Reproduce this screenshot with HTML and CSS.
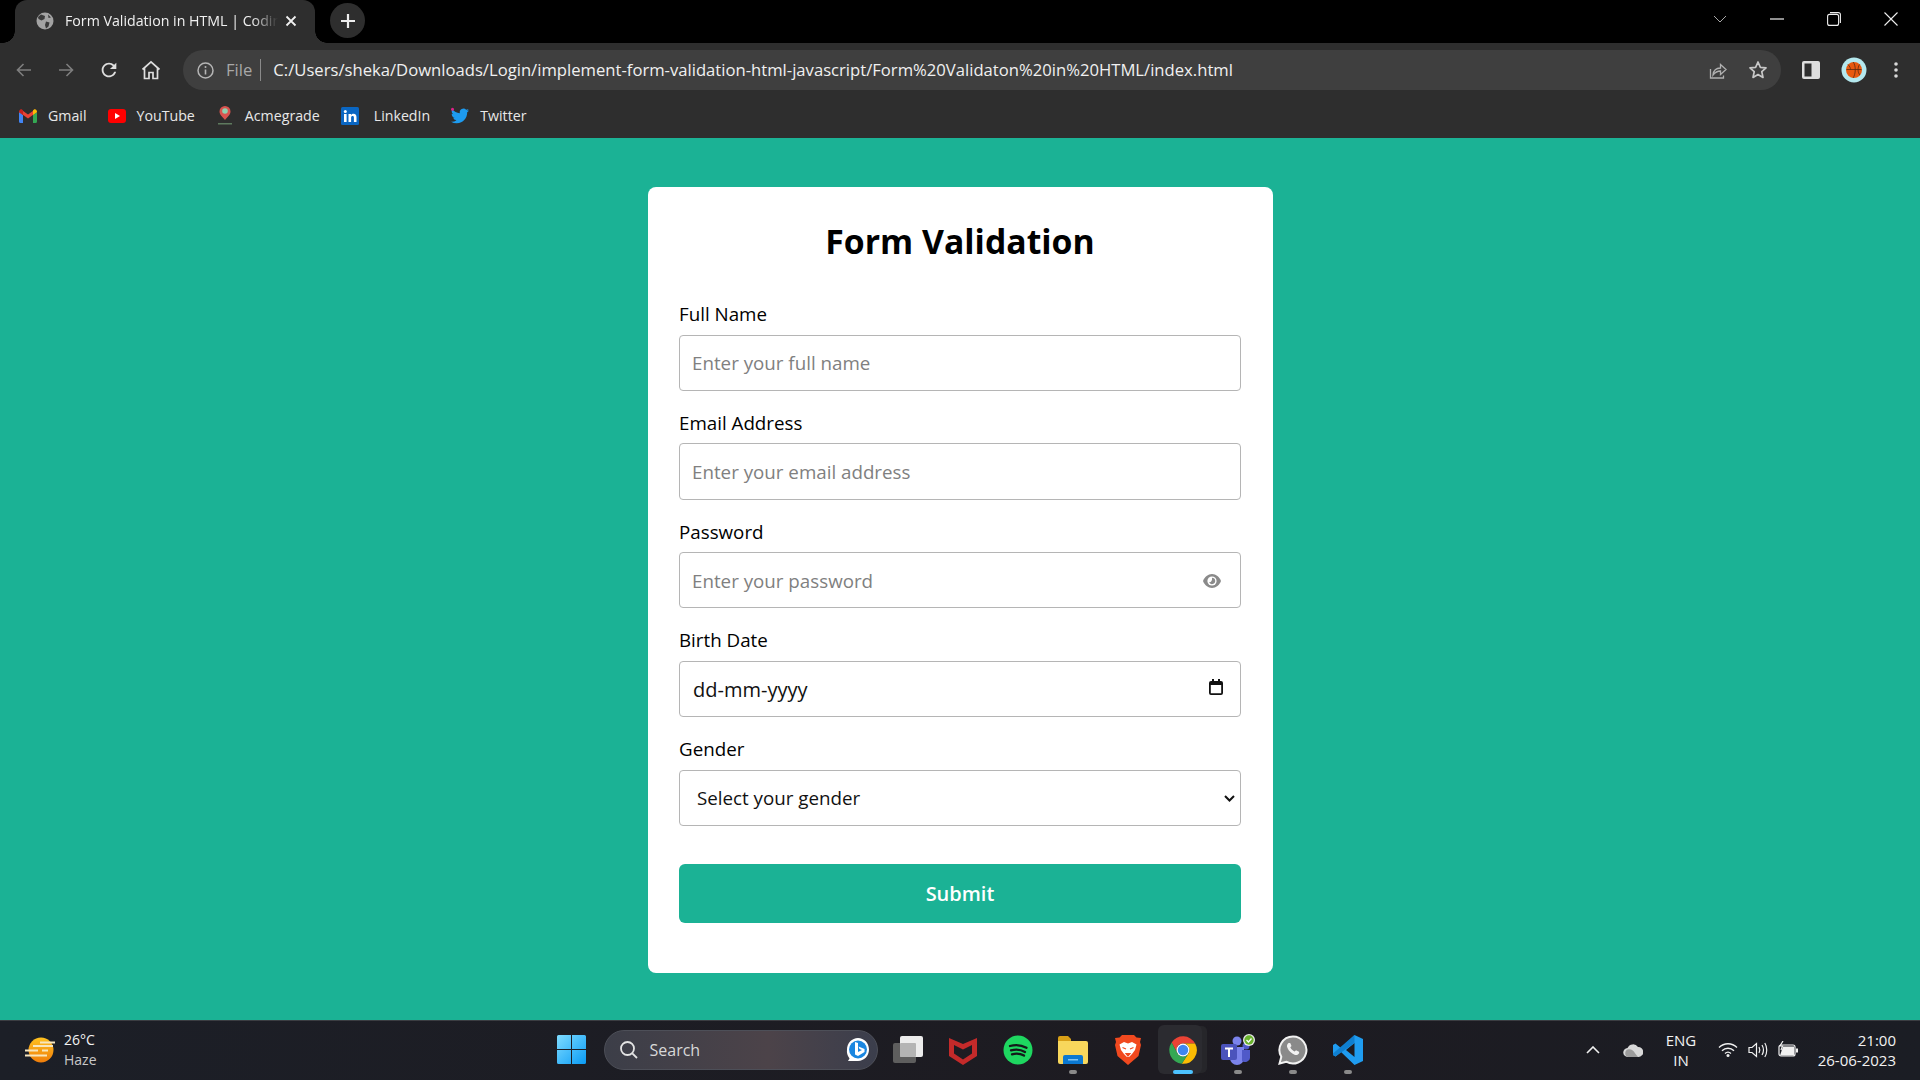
FILE: index.html
```html
<!DOCTYPE html>
<html lang="en">
<head>
    <meta charset="UTF-8">
    <meta name="viewport" content="width=device-width, initial-scale=1.0">
    <title>Form Validation in HTML</title>
    <link rel="stylesheet" href="styles.css">
</head>
<body>
    <!-- browser chrome -->
    <div class="tabstrip">
        <div class="tab">
            <svg class="tab-icon" width="18" height="18" viewBox="0 0 18 18"><circle cx="9" cy="9" r="8.5" fill="#a3a3a3"/><path d="M5 2.5l4 1.5-.5 3-3 1.5L2.5 7 2 5zM10 9.5l3.5 1-1 4-2.5 2-1-3.5zM12 2.5l3 3-2.5.5z" fill="#3a3a3a"/></svg>
            <span class="tab-title">Form Validation in HTML | Coding Nepal</span>
            <svg class="tab-close" width="12" height="12" viewBox="0 0 12 12"><path d="M1.5 1.5l9 9M10.5 1.5l-9 9" stroke="#f0f0f0" stroke-width="1.8"/></svg>
        </div>
        <div class="new-tab">
            <svg width="16" height="16" viewBox="0 0 16 16"><path d="M8 1v14M1 8h14" stroke="#eee" stroke-width="2.2"/></svg>
        </div>
        <div class="window-controls">
            <div class="win-btn win-chevron"><svg width="14" height="8" viewBox="0 0 14 8"><path d="M1 1l6 6 6-6" fill="none" stroke="#a8a8a8" stroke-width="1"/></svg></div>
            <div class="win-btn"><svg width="14" height="2" viewBox="0 0 14 2"><path d="M0 1h14" stroke="#eee" stroke-width="1.2"/></svg></div>
            <div class="win-btn"><svg width="14" height="14" viewBox="0 0 14 14"><rect x="0.6" y="2.4" width="11" height="11" rx="2" fill="none" stroke="#eee" stroke-width="1.1"/><path d="M3 0.6h8.4a2 2 0 0 1 2 2V11" fill="none" stroke="#eee" stroke-width="1.1"/></svg></div>
            <div class="win-btn"><svg width="14" height="14" viewBox="0 0 14 14"><path d="M.5.5l13 13M13.5.5l-13 13" stroke="#eee" stroke-width="1.1"/></svg></div>
        </div>
    </div>

    <div class="toolbar">
        <div class="tool-btn"><svg width="18" height="18" viewBox="0 0 18 18"><path d="M16 9H2.5M8.5 3L2.5 9l6 6" fill="none" stroke="#7e7e7e" stroke-width="1.6"/></svg></div>
        <div class="tool-btn"><svg width="18" height="18" viewBox="0 0 18 18"><path d="M2 9h13.5M9.5 3l6 6-6 6" fill="none" stroke="#7e7e7e" stroke-width="1.6"/></svg></div>
        <div class="tool-btn"><svg width="22" height="22" viewBox="0 0 24 24"><path fill="#dedede" d="M17.65 6.35A7.958 7.958 0 0 0 12 4c-4.42 0-7.99 3.58-7.99 8s3.57 8 7.99 8c3.73 0 6.84-2.55 7.73-6h-2.08A5.99 5.99 0 0 1 12 18c-3.31 0-6-2.69-6-6s2.69-6 6-6c1.66 0 3.14.69 4.22 1.78L13 11h7V4l-2.35 2.35z"/></svg></div>
        <div class="tool-btn"><svg width="20" height="20" viewBox="0 0 20 20"><path d="M1.5 9.5L10 1.8l8.5 7.7M3.5 8v10.500h4.500v-6h4v6h4.500V8" fill="none" stroke="#dedede" stroke-width="1.7"/></svg></div>
        <div class="omnibox">
            <svg class="omni-info" width="17" height="17" viewBox="0 0 17 17"><circle cx="8.500" cy="8.500" r="7.500" fill="none" stroke="#b5b5b5" stroke-width="1.500"/><path d="M8.500 7.500v5" stroke="#b5b5b5" stroke-width="1.600"/><circle cx="8.500" cy="5" r="1" fill="#b5b5b5"/></svg>
            <span class="omni-file">File</span>
            <span class="omni-sep"></span>
            <span class="omni-url">C:/Users/sheka/Downloads/Login/implement-form-validation-html-javascript/Form%20Validaton%20in%20HTML/index.html</span>
            <div class="omni-icon"><svg width="20" height="20" viewBox="0 0 20 20"><path d="M3.500 9v9h13v-2.500" fill="none" stroke="#b0b0b0" stroke-width="1.300"/><path d="M6 15c.5-4.500 3.500-7 7.500-7V4.500L19 9.500l-5.500 5V11C10.500 11 8 12.500 6 15z" fill="none" stroke="#b0b0b0" stroke-width="1.300"/></svg></div>
            <div class="omni-icon"><svg width="20" height="20" viewBox="0 0 20 20"><path d="M10 2l2.400 5.300 5.600.6-4.200 3.800 1.200 5.700-5-2.900-5 2.900 1.200-5.700L2 7.900l5.600-.6z" fill="none" stroke="#c8c8c8" stroke-width="1.700" stroke-linejoin="round"/></svg></div>
        </div>
        <div class="tool-btn"><svg width="18" height="18" viewBox="0 0 18 18"><rect width="18" height="18" rx="2" fill="#dedede"/><rect x="2.500" y="2.500" width="7" height="13" fill="#2e2e2e"/></svg></div>
        <div class="tool-btn"><svg width="26" height="26" viewBox="0 0 26 26"><circle cx="13" cy="13" r="12.500" fill="#b4e8ee"/><circle cx="13" cy="13" r="8" fill="#e8590f"/><path d="M5.500 12.500h15M12 5c3 3 3 12 0 16M7 7.500c2 2 2.500 4 2.500 5M18.500 7.500c-2 3-2 8 .5 10.500" fill="none" stroke="#5a2a10" stroke-width=".8"/></svg></div>
        <div class="tool-btn"><svg width="6" height="18" viewBox="0 0 6 18"><circle cx="3" cy="3" r="1.800" fill="#d8d8d8"/><circle cx="3" cy="9" r="1.800" fill="#d8d8d8"/><circle cx="3" cy="15" r="1.800" fill="#d8d8d8"/></svg></div>
    </div>

    <div class="bookmarks">
        <div class="bookmark">
            <svg width="18" height="14" viewBox="0 0 18 14"><path d="M0 3v9.500A1.500 1.500 0 0 0 1.500 14H4V6z" fill="#4285f4"/><path d="M14 14h2.500a1.500 1.500 0 0 0 1.500-1.500V3l-4 3z" fill="#34a853"/><path d="M0 3l9 6.500L18 3 16 .5 9 5.500 2 .5z" fill="#ea4335"/><path d="M0 3c0-2 1.500-3.300 3-2.500L4 1.500V6z" fill="#c5221f"/><path d="M14 1.500L15 .5c1.500-.8 3 .5 3 2.500l-4 3z" fill="#fbbc04"/></svg>
            <span>Gmail</span>
        </div>
        <div class="bookmark">
            <svg width="18" height="14" viewBox="0 0 18 14"><rect width="18" height="14" rx="3" fill="#f00"/><path d="M7 4l5 3-5 3z" fill="#fff"/></svg>
            <span>YouTube</span>
        </div>
        <div class="bookmark">
            <svg width="18" height="20" viewBox="0 0 18 20"><path d="M9 0a5.500 5.500 0 0 1 5.500 5.500C14.500 9 11 11 9 14 7 11 3.500 9 3.500 5.500A5.500 5.500 0 0 1 9 0z" fill="#d9534f"/><circle cx="9" cy="5" r="2.800" fill="#8fd1b0"/><path d="M2 17h14v1.500H2z" fill="#5e7a5e"/></svg>
            <span>Acmegrade</span>
        </div>
        <div class="bookmark wide-gap">
            <svg width="18" height="18" viewBox="0 0 18 18"><rect width="18" height="18" rx="1.500" fill="#0a66c2"/><rect x="3" y="7" width="2.600" height="8" fill="#fff"/><circle cx="4.300" cy="4.500" r="1.500" fill="#fff"/><path d="M7.500 7H10v1.200c.5-.9 1.500-1.400 2.600-1.400 2 0 2.900 1.300 2.900 3.500V15h-2.600v-4.200c0-1-.4-1.700-1.300-1.700-1 0-1.500.7-1.500 1.700V15H7.500z" fill="#fff"/></svg>
            <span>LinkedIn</span>
        </div>
        <div class="bookmark">
            <svg width="18" height="18" viewBox="0 0 24 24"><path fill="#1d9bf0" d="M23.953 4.570a10 10 0 01-2.825.775 4.958 4.958 0 002.163-2.723c-.951.555-2.005.959-3.127 1.184a4.920 4.920 0 00-8.384 4.482C7.690 8.095 4.067 6.130 1.640 3.162a4.822 4.822 0 00-.666 2.475c0 1.710.870 3.213 2.188 4.096a4.904 4.904 0 01-2.228-.616v.060a4.923 4.923 0 003.946 4.827 4.996 4.996 0 01-2.212.085 4.936 4.936 0 004.604 3.417 9.867 9.867 0 01-6.102 2.105c-.390 0-.779-.023-1.170-.067a13.995 13.995 0 007.557 2.209c9.053 0 13.998-7.496 13.998-13.985 0-.210 0-.420-.015-.630A9.935 9.935 0 0024 4.590z"/><circle cx="2" cy="3" r="2" fill="#e0218a"/></svg>
            <span>Twitter</span>
        </div>
    </div>

    <!-- the page itself -->
    <main class="page">
        <section class="container">
            <h1>Form Validation</h1>
            <form class="form">
                <div class="field">
                    <label for="fullname">Full Name</label>
                    <input type="text" id="fullname" placeholder="Enter your full name">
                </div>
                <div class="field">
                    <label for="email">Email Address</label>
                    <input type="text" id="email" placeholder="Enter your email address">
                </div>
                <div class="field">
                    <label for="password">Password</label>
                    <div class="input-wrap">
                        <input type="text" id="password" placeholder="Enter your password">
                        <svg class="eye" width="18" height="14" viewBox="0 0 18 14"><path d="M9 0c4 0 7.500 3 9 7-1.500 4-5 7-9 7s-7.500-3-9-7c1.500-4 5-7 9-7z" fill="#8a8a8a"/><circle cx="9" cy="7" r="4.600" fill="#fff"/><path d="M9 3.800a3.200 3.200 0 1 1-3 4.300c1.500.5 3.500-.8 3-4.300z" fill="#8a8a8a"/></svg>
                    </div>
                </div>
                <div class="field">
                    <label for="birth">Birth Date</label>
                    <div class="input-wrap">
                        <input type="text" id="birth" class="date-input" value="dd-mm-yyyy">
                        <svg class="calendar" width="14" height="16" viewBox="0 0 14 16"><path d="M3 0h2v2h4V0h2v2h1a2 2 0 0 1 2 2v10a2 2 0 0 1-2 2H2a2 2 0 0 1-2-2V4a2 2 0 0 1 2-2h1zM1.800 6v8.200h10.400V6z" fill="#111"/></svg>
                    </div>
                </div>
                <div class="field">
                    <label for="gender">Gender</label>
                    <div class="input-wrap">
                        <select id="gender">
                            <option>Select your gender</option>
                            <option>Male</option>
                            <option>Female</option>
                        </select>
                        <svg class="chevron" width="11" height="7" viewBox="0 0 11 7"><path d="M1 1l4.500 4.500L10 1" fill="none" stroke="#111" stroke-width="2"/></svg>
                    </div>
                </div>
                <button type="button" class="submit-btn">Submit</button>
            </form>
        </section>
    </main>

    <!-- windows taskbar -->
    <footer class="taskbar">
        <div class="weather">
            <svg width="30" height="30" viewBox="0 0 30 30"><defs><linearGradient id="sun" x1="0" y1="0" x2="0" y2="1"><stop offset="0" stop-color="#ffc21f"/><stop offset="1" stop-color="#ef7d0b"/></linearGradient></defs><circle cx="16" cy="15" r="12.500" fill="url(#sun)"/><path d="M15 7.500h15M8 11h20M0 15.500h13M17 15.500h6M0 20.500h22" stroke="#f7e6bd" stroke-width="2"/></svg>
            <div class="weather-text">
                <span>26°C</span>
                <span class="muted">Haze</span>
            </div>
        </div>
        <div class="task-center">
            <div class="task-cell start-cell">
                <svg class="start" width="29" height="29" viewBox="0 0 29 29"><defs><linearGradient id="win" x1="0" y1="0" x2="1" y2="1"><stop offset="0" stop-color="#7fdcff"/><stop offset="1" stop-color="#0a9bf5"/></linearGradient></defs><path d="M0 1.500A1.500 1.500 0 0 1 1.500 0H14v14H0zM15 0h12.500A1.500 1.500 0 0 1 29 1.500V14H15zM0 15h14v14H1.500A1.500 1.500 0 0 1 0 27.500zM15 15h14v12.500a1.500 1.500 0 0 1-1.500 1.500H15z" fill="url(#win)"/></svg>
            </div>
            <div class="search">
                <svg width="20" height="20" viewBox="0 0 20 20"><circle cx="8.500" cy="8.500" r="6.500" fill="none" stroke="#e4e4e4" stroke-width="1.800"/><path d="M13.300 13.300L18 18" stroke="#e4e4e4" stroke-width="1.800"/></svg>
                <span class="search-label">Search</span>
                <svg class="bing" width="24" height="26" viewBox="0 0 24 26"><path d="M12 1c6 0 11 5 11 11.500S18 24 12 24H2l1.500-2.500A12 12 0 0 1 1 12.500C1 6 6 1 12 1z" fill="#fff"/><circle cx="12" cy="12.500" r="9" fill="#1a86e0"/><path d="M9 5l3 1v9l4-2-2.500-1-1-2.500 6 2.500v3l-6.500 4L9 17.500z" fill="#fff"/></svg>
            </div>
            <div class="task-cell">
                <svg width="30" height="30" viewBox="0 0 30 30"><rect x="0" y="8" width="23" height="20" rx="2" fill="#5e5e5e"/><rect x="7" y="1" width="23" height="21" rx="2" fill="#ececec"/><rect x="7" y="8" width="16" height="14" rx="1" fill="#b4b4b4"/></svg>
            </div>
            <div class="task-cell">
                <svg width="28" height="30" viewBox="0 0 28 30"><path d="M0 3l14 6 14-6v18l-14 9-14-9zM5 10v8.500l9 6 9-6V10l-9 4.500z" fill="#c42a2a" fill-rule="evenodd"/></svg>
            </div>
            <div class="task-cell">
                <svg width="30" height="30" viewBox="0 0 30 30"><circle cx="15" cy="15" r="14.500" fill="#1ed760"/><path d="M7 11c5.500-1.600 11.500-1 16.500 1.800M8 15.300c4.800-1.300 10-.8 14 1.700M9 19.300c4-1 8.500-.7 12 1.300" fill="none" stroke="#14191a" stroke-width="2.300" stroke-linecap="round"/></svg>
            </div>
            <div class="task-cell has-dot">
                <svg width="30" height="28" viewBox="0 0 30 28"><path d="M0 2a2 2 0 0 1 2-2h8l3 3v4H0z" fill="#d9a017"/><path d="M0 5h28a2 2 0 0 1 2 2v19a2 2 0 0 1-2 2H2a2 2 0 0 1-2-2z" fill="#f8d75c"/><path d="M5 21a2 2 0 0 1 2-2h16a2 2 0 0 1 2 2v7H5z" fill="#0b78d1"/><path d="M10 23h10v1.500H10z" fill="#7fc4f5"/></svg>
            </div>
            <div class="task-cell">
                <svg width="26" height="30" viewBox="0 0 26 30"><path d="M7 0h12l2.500 2.500L26 3l-1 4 1 3-2.500 11L13 30 2.500 21 0 10l1-3-1-4 4.500-.5z" fill="#f1491f"/><path d="M4.500 9.500L9 7l4 1.500L17 7l4.500 2.500L20 15l-3 4-3 3h-2l-3-3-3-4z" fill="#fff"/><path d="M7.500 12.500l3.500 1.500M18.500 12.500L15 14M11 18.500h4L13 21z" stroke="#f1491f" stroke-width="1.200" fill="#f1491f"/></svg>
            </div>
            <div class="task-cell is-active">
                <svg width="30" height="30" viewBox="0 0 24 24"><path d="M12 6.800h9.700A11 11 0 0 0 2.900 5.900l4.600 8.700A5.200 5.200 0 0 1 12 6.800z" fill="#ea4335"/><path d="M21.700 6.800A11 11 0 0 1 11 23l5.500-8.400A5.200 5.200 0 0 0 12 6.800z" fill="#fbbc04"/><path d="M2.900 5.900A11 11 0 0 0 11 23l5.500-8.400a5.200 5.200 0 0 1-9 0z" fill="#34a853"/><circle cx="12" cy="12" r="5.200" fill="#fff"/><circle cx="12" cy="12" r="4.200" fill="#3f86f0"/></svg>
            </div>
            <div class="task-cell has-dot">
                <svg width="36" height="32" viewBox="0 0 36 32"><circle cx="17" cy="7" r="4.500" fill="#7b83eb"/><circle cx="26" cy="12" r="3.500" fill="#5059c9"/><path d="M10 13h14v11a7 7 0 0 1-14 0z" fill="#7b83eb"/><path d="M22 16h8v8a5 5 0 0 1-8 3z" fill="#5059c9"/><rect x="1" y="10" width="16" height="16" rx="2" fill="#4b53bc"/><path d="M5 13.500h8v2h-3V23H8v-7.500H5z" fill="#fff"/><circle cx="29" cy="6" r="6" fill="#e8e8e8"/><circle cx="29" cy="6" r="4.700" fill="#6ab42d"/><path d="M26.500 6l2 2 3-3.500" fill="none" stroke="#fff" stroke-width="1.300"/></svg>
            </div>
            <div class="task-cell has-dot">
                <svg width="30" height="30" viewBox="0 0 30 30"><path d="M15 1.500a13.500 13.500 0 1 1-6.800 25.200L1.500 28.500l1.800-6.700A13.500 13.500 0 0 1 15 1.500z" fill="#8a8a8a" stroke="#f2f2f2" stroke-width="2"/><path d="M10.500 8c-1.500 1-2 3-1 5 1.300 3 4 5.500 7 6.800 2 .8 4-.1 4.700-1.800l-.2-1.200-3-1.500-1.300 1.300c-2-.8-3.500-2.300-4.400-4.300L13.500 11 12.200 8z" fill="#f2f2f2"/></svg>
            </div>
            <div class="task-cell has-dot">
                <svg width="30" height="30" viewBox="0 0 30 30"><path d="M21.500 0L30 4v22l-8.500 4L8 17l-5.500 4.500L0 20v-10l2.500-1.500L8 13zM21.500 8L13 15l8.500 7z" fill="#1f9cf0" fill-rule="evenodd"/><path d="M21.500 0v8L2.500 21.500 0 20v-1.500z" fill="#0f7fd0"/></svg>
            </div>
        </div>
        <div class="tray">
            <div class="tray-icon wide"><svg width="14" height="8" viewBox="0 0 14 8"><path d="M1 7l6-6 6 6" fill="none" stroke="#f0f0f0" stroke-width="1.600"/></svg></div>
            <div class="tray-icon wide"><svg width="20" height="14" viewBox="0 0 20 14"><path d="M5 14a4.500 4.500 0 0 1-.5-9A6 6 0 0 1 15 4a5 5 0 0 1 .5 10z" fill="#d8d8d8"/><path d="M5 14a4 4 0 0 1 1-7.800c3 0 5 2 6 4l3 3.800z" fill="#9c9c9c"/></svg></div>
            <div class="lang">
                <span>ENG</span>
                <span>IN</span>
            </div>
            <div class="tray-icon"><svg width="20" height="15" viewBox="0 0 20 15"><path d="M1 5.500c5-5 13-5 18 0M4 8.700c3.300-3.300 8.700-3.300 12 0M7 11.500c1.700-1.500 4.300-1.500 6 0" fill="none" stroke="#f0f0f0" stroke-width="1.300"/><circle cx="10" cy="13.500" r="1.500" fill="#f0f0f0"/></svg></div>
            <div class="tray-icon"><svg width="20" height="16" viewBox="0 0 20 16"><path d="M1 5.500h3L8.500 1.500v13L4 10.500H1z" fill="none" stroke="#f0f0f0" stroke-width="1.200"/><path d="M11 5c1 1.800 1 4.200 0 6M14 3c1.800 3 1.800 7 0 10M16.800 1c2.600 4 2.600 10 0 14" fill="none" stroke="#f0f0f0" stroke-width="1.200"/></svg></div>
            <div class="tray-icon"><svg width="21" height="17" viewBox="0 0 21 17"><rect x="1" y="4" width="16" height="11" rx="2" fill="none" stroke="#f0f0f0" stroke-width="1.200"/><path d="M2 14.500l3-9h11v9z" fill="#f0f0f0"/><path d="M18 7.500h2v4h-2z" fill="#f0f0f0"/><path d="M5 0L2 5h2.500L3 9" fill="none" stroke="#f0f0f0" stroke-width="1.200"/></svg></div>
            <div class="clock">
                <span>21:00</span>
                <span>26-06-2023</span>
            </div>
        </div>
    </footer>
</body>
</html>
```

FILE: styles.css
```css
* {
    box-sizing: border-box;
    margin: 0;
    padding: 0;
}
body {
    font-family: "Open Sans", sans-serif;
    width: 1920px;
    height: 1080px;
    display: flex;
    flex-direction: column;
    overflow: hidden;
    background-color: #1bb295;
}

/* tab strip */
.tabstrip {
    height: 43px;
    display: flex;
    align-items: flex-start;
    padding-left: 15px;
    background-color: #000;
}
.tab {
    position: relative;
    width: 300px;
    height: 43px;
    display: flex;
    align-items: center;
    padding: 0 18px 2px 21px;
    background-color: #2e2e2e;
    border-radius: 12px 12px 0 0;
}
.tab::before,
.tab::after {
    content: "";
    position: absolute;
    bottom: 0;
    width: 12px;
    height: 12px;
}
.tab::before {
    left: -12px;
    background: radial-gradient(circle at 0 0, #000 11.500px, #2e2e2e 12px);
}
.tab::after {
    right: -12px;
    background: radial-gradient(circle at 100% 0, #000 11.500px, #2e2e2e 12px);
}
.tab-icon {
    flex-shrink: 0;
}
.tab-title {
    flex: 1;
    margin-left: 11px;
    font-size: 14.200px;
    color: #f0f0f0;
    white-space: nowrap;
    overflow: hidden;
    -webkit-mask-image: linear-gradient(to right, #000 88%, transparent 100%);
    mask-image: linear-gradient(to right, #000 88%, transparent 100%);
}
.tab-close {
    flex-shrink: 0;
    margin-left: 7px;
}
.new-tab {
    width: 35px;
    height: 35px;
    margin: 3px 0 0 15px;
    display: flex;
    align-items: center;
    justify-content: center;
    background-color: #2e2e2e;
    border-radius: 50%;
}
.window-controls {
    margin-left: auto;
    margin-right: 1px;
    height: 37px;
    display: flex;
    align-items: center;
}
.win-btn {
    width: 57px;
    display: flex;
    justify-content: center;
}

/* toolbar */
.toolbar {
    height: 52px;
    display: flex;
    align-items: center;
    padding: 2px 3px 0;
    background-color: #2e2e2e;
}
.tool-btn {
    width: 42.250px;
    height: 40px;
    flex-shrink: 0;
    display: flex;
    align-items: center;
    justify-content: center;
}
.omnibox {
    flex: 1;
    height: 40px;
    margin: 0 9.250px 0 11px;
    display: flex;
    align-items: center;
    padding: 0 2.500px 0 14px;
    background-color: #3f3f3f;
    border-radius: 20px;
}
.omni-file {
    margin: 0 0 2px 12px;
    font-size: 16.650px;
    color: #a8a8a8;
}
.omni-sep {
    width: 1px;
    height: 22px;
    margin: 0 12px 0 8px;
    background-color: #8a8a8a;
}
.omni-url {
    flex: 1;
    margin-bottom: 2px;
    font-size: 16.650px;
    color: #f0f0f0;
    white-space: nowrap;
    overflow: hidden;
}
.omni-icon {
    width: 41px;
    display: flex;
    justify-content: center;
}

/* bookmarks */
.bookmarks {
    height: 43px;
    display: flex;
    align-items: center;
    gap: 21px;
    padding: 0 0 2px 19px;
    background-color: #2e2e2e;
}
.bookmark {
    display: flex;
    align-items: center;
    gap: 11px;
    font-size: 14.200px;
    color: #e8e8e8;
}
.wide-gap {
    gap: 15px;
}

/* form card */
.page {
    flex: 1;
    display: flex;
    align-items: center;
    justify-content: center;
    padding-top: 2px;
    background-color: #1bb295;
}
.container {
    width: 625px;
    padding: 31px 31.500px 50px;
    background: #fff;
    border-radius: 8px;
}
h1 {
    margin-bottom: 36px;
    font-size: 33.750px;
    font-weight: 700;
    text-align: center;
    color: #000;
}
.form {
    display: flex;
    flex-direction: column;
}
.field {
    margin-bottom: 18px;
}
label {
    display: block;
    margin-bottom: 7.500px;
    font-size: 18.750px;
    line-height: 27px;
    color: #000;
}
.input-wrap {
    position: relative;
}
input,
select {
    display: block;
    width: 100%;
    height: 56.250px;
    padding: 0 12px;
    font-family: inherit;
    font-size: 18.750px;
    color: #111;
    background-color: #fff;
    border: 1px solid #b5b5b5;
    border-radius: 4px;
    outline: none;
}
input::placeholder {
    color: #808080;
}
.date-input {
    padding: 0 13px;
    font-size: 20px;
}
select {
    padding: 0 17px;
    -webkit-appearance: none;
    appearance: none;
}
.eye {
    position: absolute;
    top: 22px;
    right: 20px;
}
.calendar {
    position: absolute;
    top: 18px;
    right: 18px;
}
.chevron {
    position: absolute;
    top: 25px;
    right: 6px;
    pointer-events: none;
}
.submit-btn {
    height: 59px;
    margin-top: 20px;
    font-family: inherit;
    font-size: 20px;
    font-weight: 600;
    color: #fff;
    background-color: #1bb295;
    border: none;
    border-radius: 6px;
    cursor: pointer;
}

/* taskbar */
.taskbar {
    height: 60px;
    display: grid;
    grid-template-columns: 1fr auto 1fr;
    align-items: center;
    padding-bottom: 2px;
    color: #f2f2f2;
    background: linear-gradient(to right, #1c1f27, #1d1b21 60%, #1b1d24);
    border-top: 1px solid #3b3d42;
}
.weather {
    display: flex;
    align-items: center;
    gap: 9px;
    padding-left: 25px;
}
.weather-text {
    display: flex;
    flex-direction: column;
    font-size: 14px;
    line-height: 20px;
}
.muted {
    color: #c8c8c8;
}
.task-center {
    display: flex;
    align-items: center;
}
.task-cell {
    position: relative;
    width: 55px;
    height: 49px;
    display: flex;
    align-items: center;
    justify-content: center;
}
.start-cell {
    padding-right: 2px;
}
.has-dot::after,
.is-active::after {
    content: "";
    position: absolute;
    left: 50%;
    bottom: 0;
    height: 4px;
    width: 8px;
    margin-left: -4px;
    background-color: #8a8a8a;
    border-radius: 2px;
}
.is-active {
    width: 44px;
    margin: 0 8.500px 0 2.500px;
    padding-left: 6px;
    background-color: #2b2b30;
    border-radius: 6px;
    box-shadow: 6px 0 0 -1px #26262a;
}
.is-active::after {
    left: calc(50% + 3px);
    width: 20px;
    margin-left: -10px;
    background-color: #4cc2ff;
}
.search {
    width: 274px;
    height: 40px;
    margin: 0 3px 0 4px;
    display: flex;
    align-items: center;
    padding: 0 7px 0 14px;
    background: linear-gradient(to right, #3c3e48, #4c4349 60%, #3b3e4c);
    border: 1px solid #4d4f58;
    border-radius: 20px;
}
.search-label {
    flex: 1;
    margin-left: 11px;
    font-size: 16px;
    color: #d8d8d8;
}
.tray {
    display: flex;
    align-items: center;
    justify-content: flex-end;
    padding-right: 24px;
}
.tray-icon {
    width: 30px;
    display: flex;
    justify-content: center;
}
.tray-icon.wide {
    width: 40px;
}
.lang {
    width: 56px;
    margin-right: 4px;
    display: flex;
    flex-direction: column;
    align-items: center;
    font-size: 15px;
    line-height: 20px;
}
.clock {
    width: 93px;
    display: flex;
    flex-direction: column;
    align-items: flex-end;
    font-size: 15px;
    line-height: 20px;
}
```
